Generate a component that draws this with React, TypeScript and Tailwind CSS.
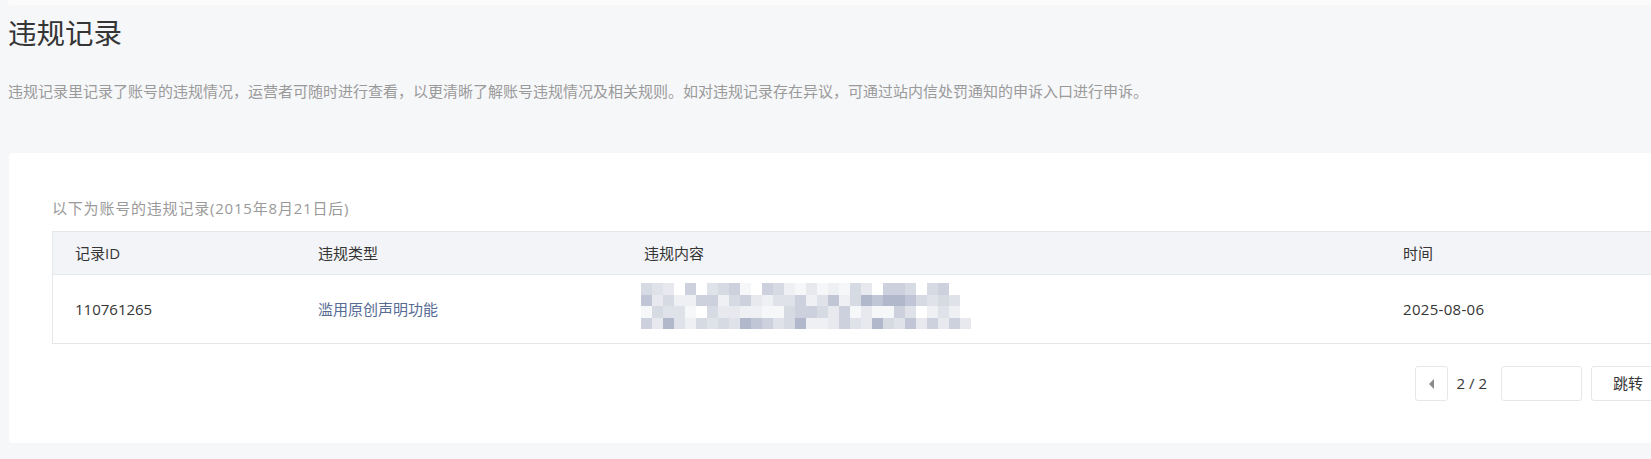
import React from "react";

const TEXT =
  "违规记录里记录了账号的违规情况，运营者可随时进行查看，以更清晰了解账号违规情况及相关规则。如对违规记录存在异议，可通过站内信处罚通知的申诉入口进行申诉。";

// mosaic that hides the record content, as in the original screenshot
const shades = ["#ffffff", "#f6f7f9", "#eff0f3", "#e7e9ee", "#dfe2e9", "#d6dae3", "#ccd1dd", "#c0c6d6", "#b2b8cc"];

function mosaicRows() {
  let seed = 20250806;
  const next = () => {
    seed = (seed * 1103515245 + 12345) % 2147483648;
    return seed / 2147483648;
  };
  const lengths = [28, 29, 30, 30];
  return lengths.map((len, r) =>
    Array.from({ length: len }, () => {
      const bias = r % 2 === 1 ? 2 : 0;
      const i = Math.min(shades.length - 1, Math.floor(next() * (shades.length - 2)) + bias);
      return shades[i];
    })
  );
}

function Mosaic() {
  const rows = mosaicRows();
  return (
    <div className="flex flex-col -ml-[3px]">
      {rows.map((row, r) => (
        <div key={r} className="flex h-[11.5px]">
          {row.map((c, i) => (
            <div key={i} className="w-[11px] h-full" style={{ backgroundColor: c }} />
          ))}
        </div>
      ))}
    </div>
  );
}

export default function App() {
  return (
    <div className="w-full h-[459px] overflow-hidden bg-[#f6f7f9] font-['Open_Sans','Noto_Sans_CJK_SC',sans-serif]">
      <div className="ml-[8px] h-[5px] w-[1700px] bg-[#fbfbfc] rounded-b-[4px]"></div>

      <h1 className="mt-[8px] pl-[8px] text-[28.5px] leading-[40px] text-[#353535] font-normal">违规记录</h1>
      <p className="mt-[26px] pl-[8px] text-[15px] leading-[24px] text-[#9a9a9a] whitespace-nowrap">{TEXT}</p>

      <section className="mt-[50px] ml-[9px] w-[1699px] bg-white rounded-[4px] pt-[44px] pb-[42px] px-[43px]">
        <p className="text-[15px] leading-[22px] text-[#9a9a9a] tracking-[0.8px]">以下为账号的违规记录(2015年8月21日后)</p>

        <div className="mt-[12px] border border-[#e4e8eb]">
          <div className="grid grid-cols-[243px_326px_759px_1fr] h-[43px] items-center bg-[#f3f4f7] border-b border-[#e4e8eb] text-[15px] text-[#353535]">
            <div className="pl-[22px]">记录ID</div>
            <div className="pl-[22px]">违规类型</div>
            <div className="pl-[22px]">违规内容</div>
            <div className="pl-[22px]">时间</div>
          </div>
          <div className="grid grid-cols-[243px_326px_759px_1fr] h-[68px] items-center text-[15px]">
            <div className="pl-[22px] text-[#353535]">110761265</div>
            <div className="pl-[22px] text-[#576b95]">滥用原创声明功能</div>
            <div className="pl-[22px] flex items-center h-full">
              <div className="-mt-[6px]">
                <Mosaic />
              </div>
            </div>
            <div className="pl-[22px] text-[#353535] tracking-[0.3px]">2025-08-06</div>
          </div>
        </div>

        <div className="mt-[22px] flex justify-end items-center h-[35px] text-[15px] text-[#353535]">
          <button className="w-[33px] h-[35px] border border-[#e4e8eb] rounded-[3px] bg-white flex items-center justify-center">
            <span className="w-0 h-0 border-y-[5px] border-y-transparent border-r-[5px] border-r-[#8a8a8a]"></span>
          </button>
          <span className="ml-[9px] mr-[14px]">2 / 2</span>
          <input className="w-[81px] h-[35px] border border-[#e4e8eb] rounded-[3px] outline-none" />
          <button className="ml-[9px] w-[74px] h-[35px] border border-[#e4e8eb] rounded-[3px] bg-white text-[#353535]">跳转</button>
        </div>
      </section>
    </div>
  );
}
